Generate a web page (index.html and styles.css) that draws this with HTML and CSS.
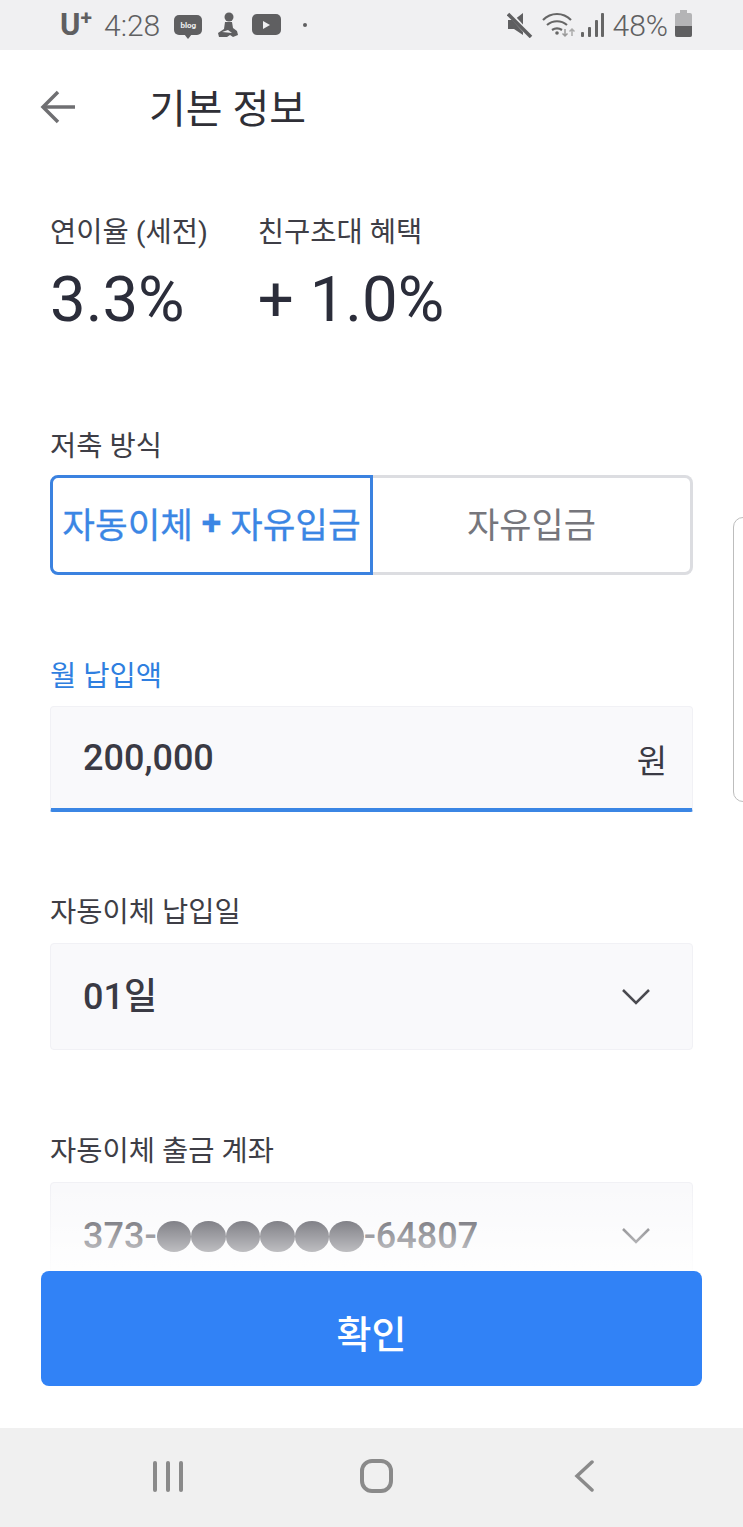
FILE: index.html
```html
<!DOCTYPE html>
<html lang="ko">
<head>
    <meta charset="UTF-8">
    <meta name="viewport" content="width=device-width, initial-scale=1.0">
    <title>기본 정보</title>
    <link rel="stylesheet" href="styles.css">
</head>
<body>
    <div class="phone">
        <!-- Status bar -->
        <div class="status-bar">
            <div class="status-left">
                <span class="carrier">U<sup>+</sup></span>
                <span class="clock">4:28</span>
                <span class="blog-icon"><span>blog</span></span>
                <svg class="st-icon" width="22" height="26" viewBox="0 0 22 26">
                    <circle cx="12" cy="5" r="4.500" fill="#5f5f61"/>
                    <path d="M8 10h7l1 6 4 3 1 4-5 2-3-2-3 2H2l-1-4 6-4z" fill="#5f5f61"/>
                    <path d="M5 20l6-2 4 3z" fill="#f0f0f2"/>
                </svg>
                <svg class="st-icon yt" width="29" height="22" viewBox="0 0 29 22">
                    <rect width="29" height="21" rx="5" fill="#5f5f61"/>
                    <path d="M11 7l7 4-7 4z" fill="#f0f0f2"/>
                </svg>
                <span class="dot"></span>
            </div>
            <div class="status-right">
                <svg width="26" height="26" viewBox="0 0 26 26">
                    <path d="M1 8h6l9-7v22l-9-6H1z" fill="#5f5f61"/>
                    <path d="M2 1l22 24" stroke="#f0f0f2" stroke-width="5"/>
                    <path d="M1 2l23 23" stroke="#5f5f61" stroke-width="3.500"/>
                </svg>
                <svg class="wifi" width="35" height="26" viewBox="0 0 35 26" fill="none" stroke="#666" stroke-width="2.200">
                    <path d="M1 8c8-8 20-8 28 0"/>
                    <path d="M5 13c6-5 14-5 20 0"/>
                    <path d="M10 18c3-2 7-2 10 0"/>
                    <circle cx="15" cy="21" r="1.800" fill="#666" stroke="none"/>
                    <path d="M23 17v7M20.500 21.500l2.500 2.500 2.500-2.500" stroke="#999" stroke-width="1.500"/>
                    <path d="M30 24v-7M27.500 19.500l2.500-2.500 2.500 2.500" stroke="#aaa" stroke-width="1.500"/>
                </svg>
                <svg class="signal" width="23" height="26" viewBox="0 0 23 26" fill="#666">
                    <rect x="0" y="20" width="3" height="5" rx="1"/>
                    <rect x="7" y="15" width="3" height="10" rx="1"/>
                    <rect x="14" y="8" width="3" height="17" rx="1"/>
                    <rect x="20" y="1" width="3" height="24" rx="1"/>
                </svg>
                <span class="battery-text">48%</span>
                <span class="battery"><span class="battery-level"></span></span>
            </div>
        </div>

        <!-- Main content -->
        <div class="main">
            <div class="header">
                <svg class="back" width="36" height="34" viewBox="0 0 36 34" fill="none" stroke="#6f6f72" stroke-width="3.500">
                    <path d="M35 17H4"/>
                    <path d="M18 2L3 17l15 15"/>
                </svg>
                <h1>기본 정보</h1>
            </div>

            <div class="rates">
                <div class="rate">
                    <p class="label">연이율 (세전)</p>
                    <p class="rate-value">3.3%</p>
                </div>
                <div class="rate">
                    <p class="label">친구초대 혜택</p>
                    <p class="rate-value">+ 1.0%</p>
                </div>
            </div>

            <div class="field method">
                <p class="label">저축 방식</p>
                <div class="segment">
                    <div class="seg-item active">자동이체&nbsp;<b>+</b>&nbsp;자유입금</div>
                    <div class="seg-item">자유입금</div>
                </div>
            </div>

            <div class="field amount">
                <p class="label blue">월 납입액</p>
                <div class="input focused">
                    <span class="value">200,000</span>
                    <span class="unit">원</span>
                </div>
            </div>

            <div class="field day">
                <p class="label">자동이체 납입일</p>
                <div class="input">
                    <span class="value">01일</span>
                    <svg class="chevron" width="30" height="17" viewBox="0 0 30 17" fill="none" stroke="#4a4a50" stroke-width="2.500">
                        <path d="M2 2l13 13L28 2"/>
                    </svg>
                </div>
            </div>

            <div class="field account">
                <p class="label">자동이체 출금 계좌</p>
                <div class="input">
                    <span class="value">373-<span class="masks"><i></i><i></i><i></i><i></i><i></i><i></i></span>-64807</span>
                    <svg class="chevron" width="30" height="17" viewBox="0 0 30 17" fill="none" stroke="#4a4a50" stroke-width="2.500">
                        <path d="M2 2l13 13L28 2"/>
                    </svg>
                </div>
            </div>

            <div class="side-handle"></div>

            <div class="bottom">
                <button class="confirm">확인</button>
            </div>
        </div>

        <!-- Android nav bar -->
        <div class="nav-bar">
            <svg width="32" height="32" viewBox="0 0 32 32" fill="#8a8a8a">
                <rect x="1" y="1" width="4" height="31" rx="2"/>
                <rect x="14" y="1" width="4" height="31" rx="2"/>
                <rect x="27" y="1" width="4" height="31" rx="2"/>
            </svg>
            <svg class="home" width="33" height="34" viewBox="0 0 33 34" fill="none" stroke="#8a8a8a" stroke-width="4">
                <rect x="2" y="2" width="29" height="30" rx="10"/>
            </svg>
            <svg width="20" height="32" viewBox="0 0 20 32" fill="none" stroke="#8a8a8a" stroke-width="3.500" stroke-linecap="round">
                <path d="M18 2L3 16l15 14"/>
            </svg>
        </div>
    </div>
</body>
</html>
```

FILE: styles.css
```css
/* page frame */
* {
    box-sizing: border-box;
}
body {
    margin: 0;
    font-family: Roboto, "Noto Sans CJK KR", sans-serif;
    color: #32323c;
    background-color: white;
}
p, h1 {
    margin: 0;
    font-weight: 400;
}
.phone {
    display: flex;
    flex-direction: column;
    width: 743px;
    height: 1527px;
    overflow: hidden;
}

/* status bar */
.status-bar {
    display: flex;
    justify-content: space-between;
    align-items: center;
    height: 50px;
    padding: 0 51px 0 60px;
    background-color: #f0f0f2;
    color: #5f5f61;
}
.status-left, .status-right {
    display: flex;
    align-items: center;
}
.carrier {
    width: 34px;
    font-size: 31px;
    font-weight: 700;
    line-height: 32px;
}
.carrier sup {
    font-size: 21px;
    line-height: 0;
    vertical-align: 10px;
}
.clock {
    margin-left: 10px;
    font-size: 30px;
    font-weight: 300;
}
.blog-icon {
    position: relative;
    display: flex;
    justify-content: center;
    align-items: center;
    width: 28px;
    height: 20px;
    margin-left: 14px;
    border-radius: 5px;
    background-color: #5f5f61;
    color: #f0f0f2;
    font-size: 8px;
    font-weight: 700;
}
.blog-icon::after {
    content: "";
    position: absolute;
    left: 10px;
    bottom: -4px;
    border-left: 4px solid transparent;
    border-right: 4px solid transparent;
    border-top: 5px solid #5f5f61;
}
.st-icon {
    margin-left: 15px;
}
.st-icon.yt {
    margin-left: 13px;
}
.dot {
    width: 4px;
    height: 4px;
    margin-left: 22px;
    border-radius: 50%;
    background-color: #5f5f61;
}
.wifi {
    margin-left: 9px;
}
.signal {
    margin-left: 4px;
}
.battery-text {
    margin-left: 9px;
    font-size: 30px;
    font-weight: 300;
}
.battery {
    position: relative;
    width: 17px;
    height: 24px;
    margin-left: 7px;
    border-radius: 2px;
    background-color: #b4b4b6;
}
.battery::before {
    content: "";
    position: absolute;
    top: -3px;
    left: 5px;
    width: 7px;
    height: 3px;
    background-color: #b4b4b6;
}
.battery-level {
    position: absolute;
    left: 0;
    right: 0;
    bottom: 0;
    height: 11px;
    border-radius: 0 0 2px 2px;
    background-color: #5f5f61;
}

/* main column */
.main {
    position: relative;
    flex: 1;
    padding: 0 50px;
    overflow: hidden;
    background-color: white;
}
.header {
    display: flex;
    align-items: center;
    height: 114px;
    margin-left: -10px;
}
.back {
    margin-right: 73px;
}
h1 {
    margin-top: -3px;
    font-size: 40px;
    color: #2f2f36;
}
.label {
    font-size: 28.500px;
    line-height: 40px;
    color: #3e3e46;
}
.label.blue {
    color: #2f7fe0;
}
.rates {
    display: flex;
    gap: 50px;
    margin-top: 49px;
}
.rate-value {
    margin-top: 11px;
    font-size: 63.500px;
    line-height: 72px;
    color: #2b2d3a;
}

/* fields */
.field .label {
    margin-bottom: 10px;
}
.method {
    margin-top: 91px;
}
.method .label {
    margin-bottom: 8px;
}
.segment {
    display: flex;
    height: 100px;
}
.seg-item {
    display: flex;
    flex: 1;
    justify-content: center;
    align-items: center;
    padding-bottom: 5px;
    border: 3px solid #dcdde1;
    border-left: none;
    border-radius: 0 8px 8px 0;
    font-size: 35px;
    color: #76767c;
}
.seg-item.active {
    border: 3px solid #3b82e0;
    border-radius: 8px 0 0 8px;
    font-size: 35.500px;
    color: #3b86e4;
    -webkit-text-stroke: 0.3px #3b86e4;
}
.amount {
    margin-top: 82px;
}
.amount .label {
    margin-bottom: 9px;
}
.input {
    display: flex;
    justify-content: space-between;
    align-items: center;
    height: 107px;
    padding: 0 25px 0 32px;
    border: 1px solid #f1f1f5;
    border-radius: 4px;
    background-color: #f9f9fb;
}
.input.focused {
    height: 106px;
    border-bottom: 4px solid #3b86e4;
    border-radius: 4px 4px 2px 2px;
}
.input .chevron {
    margin-right: 16px;
}
.value {
    font-size: 36px;
    font-weight: 500;
    line-height: 42px;
    color: #3a3a44;
}
.unit {
    margin-bottom: -2px;
    font-size: 33px;
    color: #3a3a44;
}
.day {
    margin-top: 81px;
}
.account {
    margin-top: 82px;
}
.masks {
    display: inline-flex;
    vertical-align: -4px;
}
.masks i {
    width: 34.500px;
    height: 31px;
    border-radius: 50%;
    background-color: #3a3a44;
}

/* things lying over the form */
.side-handle {
    position: absolute;
    top: 467px;
    left: 733px;
    width: 20px;
    height: 285px;
    border: 1px solid #bdbdbd;
    border-radius: 10px;
    background-color: white;
}
.bottom {
    position: absolute;
    left: 0;
    right: 0;
    bottom: 0;
    height: 243px;
    padding: 86px 41px 0;
    background: linear-gradient(to bottom, rgba(255, 255, 255, 0), white 100px);
}
.confirm {
    display: block;
    width: 100%;
    height: 115px;
    padding-top: 6px;
    border: none;
    border-radius: 8px;
    background-color: #3182f6;
    font-family: inherit;
    font-size: 38px;
    font-weight: 500;
    color: white;
}

/* bottom nav */
.nav-bar {
    display: flex;
    justify-content: space-between;
    align-items: center;
    height: 99px;
    padding: 0 149px 3px 152px;
    background-color: #f0f0f0;
}
.home {
    margin: 0 3px 0 -3px;
}
```
